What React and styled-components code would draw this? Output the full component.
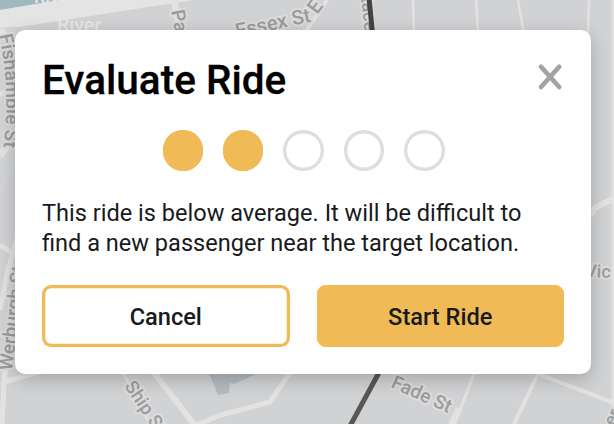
import React from "react";
import styled, { createGlobalStyle } from "styled-components";

const GlobalStyle = createGlobalStyle`
  *, *::before, *::after { box-sizing: border-box; }
  body { margin: 0; overflow: hidden; font-family: Roboto, sans-serif; }
  button { font: inherit; cursor: pointer; }
`;

const Screen = styled.main`
  display: grid;
  width: 614px;
  height: 424px;
  overflow: hidden;
  background: #d1d2d4;
`;

const Map = styled.svg`
  grid-area: 1 / 1;
  width: 614px;
  height: 424px;
`;

const Street = styled.path`
  fill: none;
  stroke: #e2e2e2;
  stroke-width: ${(p) => p.$width || 3}px;
`;

const Rail = styled.path`
  fill: none;
  stroke: ${(p) => (p.$dark ? "#444" : "#575757")};
  stroke-width: 5px;
`;

const Label = styled.text`
  font: 500 ${(p) => p.$size || 19}px Roboto, sans-serif;
  letter-spacing: ${(p) => p.$spacing || 0}px;
  fill: ${(p) => (p.$water ? "#e6e6e6" : "#9b9b9b")};
  stroke: ${(p) => (p.$water ? "none" : "#dcdcdc")};
  stroke-width: 4px;
  stroke-linejoin: round;
  paint-order: stroke;
`;

const Dialog = styled.section`
  grid-area: 1 / 1;
  z-index: 1;
  display: flex;
  flex-direction: column;
  width: 576px;
  height: 344.5px;
  margin: 29.5px 0 0 15px;
  padding: 27px;
  border-radius: 10px;
  background: #fff;
  box-shadow: 0 5px 18px rgba(0, 0, 0, 0.22);
`;

const Header = styled.header`
  display: flex;
  justify-content: space-between;
  height: 46px;
`;

const Title = styled.h1`
  margin: 0;
  font-size: 40.5px;
  line-height: 46px;
  font-weight: 500;
  color: #000;
  -webkit-text-stroke: 0.3px #000;
`;

const CloseButton = styled.button`
  display: flex;
  width: 28px;
  height: 28px;
  margin-top: 6px;
  padding: 0;
  border: 0;
  background: none;
`;

const Rating = styled.div`
  display: flex;
  gap: 19.9px;
  margin: 27.5px 0 0 120.5px;
`;

const Dot = styled.span`
  width: 40.5px;
  height: 40.5px;
  border-radius: 50%;
  background: ${(p) => (p.$filled ? "#f0bb57" : "transparent")};
  box-shadow: inset 0 0 0 3.4px ${(p) => (p.$filled ? "#f0bb57" : "#dedede")};
`;

const Message = styled.p`
  margin: 27.5px 0 0;
  font-size: 23.56px;
  line-height: 30px;
  color: #181a1c;
  white-space: nowrap;
`;

const Actions = styled.div`
  display: grid;
  grid-template-columns: 1fr 1fr;
  gap: 27px;
  margin-top: auto;
`;

const ActionButton = styled.button`
  height: 62px;
  padding: 2px 0 0;
  border: 0;
  border-radius: 9px;
  box-shadow: inset 0 0 0 3.3px #f0bb57;
  background: ${(p) => (p.$primary ? "#f0bb57" : "#fff")};
  color: #181a1c;
  font-size: 23.6px;
  font-weight: 500;
`;

const ratings = [true, true, false, false, false];

function MapBackdrop() {
  return (
    <Map viewBox="0 0 614 424" aria-hidden="true">
      <defs>
        <path id="fishamble" d="M-1 35Q11 90 3 152" />
      </defs>
      <path d="M0 0H60L0 10Z" fill="#a2b8bf" />
      <path d="M60 0H193L0 30V10Z" fill="#e4e4e4" />
      <path d="M0 28L15 26V170L0 195Z" fill="#d2d4d6" />
      <Street $width={7} d="M174 0L181 34M0 30L18 50M0 156L18 130" />
      <Street $width={5} d="M0 94L16 91M0 245L16 255M0 310L8 270L18 235" />
      <Street $width={5} d="M2 424L4 382L8 350L19 322M4 382L50 369" />
      <Street $width={4} d="M300 40L327 0" />
      <Street $width={2.5} d="M413 0L414 34M476 0L478 34M518 0L524 34M589 0L588 34" />
      <Street $width={6} d="M590 216L595 208L614 198" />
      <Street $width={3} d="M613 0V424" />
      <Street $width={3} d="M120 367L150 424" />
      <Street $width={6} d="M151 369L194 424" />
      <Street $width={5} d="M194 426L221 415L270 402L291 371" />
      <path d="M208 371H263L234 384L230 383L229 393L218 395Z" fill="#b5bac1" />
      <Street $width={3} d="M474 374L460 410" />
      <Street $width={7} d="M459 408L451 427" />
      <Street $width={4} d="M538 374L514 424M538 374L614 403" />
      <Rail d="M382 367L350 426" />
      <Label $water transform="translate(57 31) rotate(1)" $size={19.5}>River</Label>
      <Label $water transform="translate(34 3)" $size={18}>River</Label>
      <Label $size={19} $spacing={0.2}>
        <textPath href="#fishamble">Fishamble St</textPath>
      </Label>
      <Label transform="translate(171 11) rotate(79)" $size={19}>Parl</Label>
      <Label transform="translate(237 38) rotate(-12.5)" $size={20}>Essex St</Label>
      <Label transform="translate(317 15) rotate(-53)" $size={20}>E</Label>
      <Label transform="translate(361 -3) rotate(84)" $size={18}>tace</Label>
      <Label transform="translate(12 371) rotate(-83)">Werburgh St</Label>
      <Label transform="translate(124 386) rotate(56)" $size={18.5}>Ship St</Label>
      <Label transform="translate(390 387) rotate(24)">Fade St</Label>
      <Label transform="translate(585 277) rotate(2)" $size={18}>Vic</Label>
      <Label transform="translate(614 427) rotate(-65)" $size={18}>er</Label>
      <Rail $dark d="M369 -2L373 38" />
    </Map>
  );
}

export default function App() {
  return (
    <>
      <GlobalStyle />
      <Screen>
        <MapBackdrop />
        <Dialog role="dialog" aria-labelledby="ride-title">
          <Header>
            <Title id="ride-title">Evaluate Ride</Title>
            <CloseButton aria-label="Close">
              <svg width="28" height="28" viewBox="0 0 28 28" aria-hidden="true">
                <path d="M5 3.8L23.2 24M23.2 3.8L5 24" stroke="#a3a3a3" strokeWidth="4.7" strokeLinecap="round" />
              </svg>
            </CloseButton>
          </Header>
          <Rating aria-label="2 out of 5">
            {ratings.map((filled, index) => (
              <Dot key={index} $filled={filled} />
            ))}
          </Rating>
          <Message>
            This ride is below average. It will be difficult to
            <br />
            find a new passenger near the target location.
          </Message>
          <Actions>
            <ActionButton>Cancel</ActionButton>
            <ActionButton $primary>Start Ride</ActionButton>
          </Actions>
        </Dialog>
      </Screen>
    </>
  );
}
